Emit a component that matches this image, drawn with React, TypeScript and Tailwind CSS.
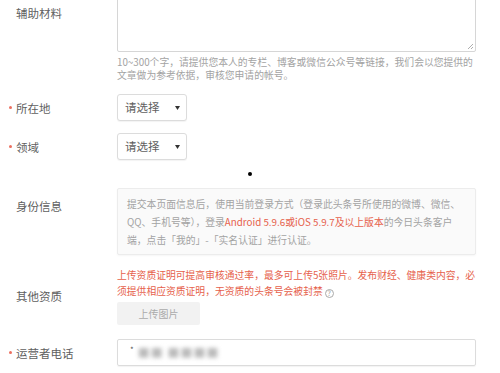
import React from "react";

function Label({ text, required }: { text: string; required?: boolean }) {
  return (
    <div className="flex w-[117px] shrink-0 items-center pl-[9px] text-[11.5px] leading-[16px] text-[#5f5f5f]">
      <span className="flex w-[7px] items-center">
        {required && <span className="h-[3px] w-[3px] rounded-full bg-[#ec6f5f]" />}
      </span>
      <span>{text}</span>
    </div>
  );
}

function Select() {
  return (
    <div className="flex h-[27px] w-[70px] items-center justify-between rounded-[3px] border border-[#dcdcdc] bg-white pl-[7px] pr-[6px] text-[11.5px] text-[#5f5f5f] shadow-[0_1px_1px_rgba(0,0,0,0.05)]">
      <span>请选择</span>
      <svg width="5" height="4" viewBox="0 0 5 4">
        <path d="M0 0H5L2.5 4Z" fill="#333" />
      </svg>
    </div>
  );
}

export default function App() {
  return (
    <div
      className="h-[373px] w-[500px] overflow-hidden bg-white"
      style={{ fontFamily: '"Noto Sans CJK SC", "Noto Sans", sans-serif' }}
    >
      <div className="-mt-[22px] flex items-start">
        <div className="mt-[27px]">
          <Label text="辅助材料" />
        </div>
        <div className="relative h-[74px] w-[359px] rounded-[2px] border border-[#d6d6d6]">
          <svg className="absolute bottom-[1px] right-[1px]" width="7" height="7" viewBox="0 0 7 7">
            <path d="M6 1L1 6M6 4L4 6" stroke="#999" strokeWidth="0.8" />
          </svg>
        </div>
      </div>
      <div className="ml-[117px] mt-[4px] w-[360px] text-[9.8px] leading-[13px] text-[#a3a3a3]">
        10~300个字，请提供您本人的专栏、博客或微信公众号等链接，我们会以您提供的文章做为参考依据，审核您申请的帐号。
      </div>

      <div className="mt-[12px] flex items-center">
        <Label text="所在地" required />
        <Select />
      </div>
      <div className="mt-[12px] flex items-center">
        <Label text="领域" required />
        <Select />
      </div>

      <div className="flex h-[28px] items-center pl-[248px]">
        <div className="h-[4px] w-[4px] rounded-full bg-black" />
      </div>

      <div className="flex items-start">
        <div className="mt-[10px]">
          <Label text="身份信息" />
        </div>
        <div className="w-[359px] rounded-[2px] border border-[#ececec] bg-[#fafafa] px-[9px] pb-[5px] pt-[6px] text-[9.8px] leading-[18px] text-[#a3a3a3] shadow-[0_1px_2px_rgba(0,0,0,0.04)]">
          提交本页面信息后，使用当前登录方式（登录此头条号所使用的微博、微信、QQ、手机号等），登录
          <span className="text-[#e6614c]">Android 5.9.6或iOS 5.9.7及以上版本</span>
          的今日头条客户端，点击「我的」-「实名认证」进行认证。
        </div>
      </div>

      <div className="mt-[12px] flex items-center">
        <Label text="其他资质" />
        <div className="w-[360px]">
          <div className="text-[9.8px] leading-[16px] text-[#e6614c]">
            上传资质证明可提高审核通过率，最多可上传5张照片。发布财经、健康类内容，必须提供相应资质证明，无资质的头条号会被封禁
            <span className="ml-[2px] inline-flex h-[9px] w-[9px] items-center justify-center rounded-full border border-[#aaa] align-[-1px] text-[7px] leading-none text-[#999]">
              ?
            </span>
          </div>
          <div className="mt-[3px] flex h-[23px] w-[83px] items-center justify-center rounded-[2px] bg-[#f2f2f2] text-[10px] text-[#aaa]">
            上传图片
          </div>
        </div>
      </div>

      <div className="mt-[14px] flex items-center">
        <Label text="运营者电话" required />
        <div className="flex h-[27px] w-[359px] items-center rounded-[2px] border border-[#dcdcdc] pl-[12px] shadow-[0_1px_1px_rgba(0,0,0,0.05)]">
          <span className="-mt-[6px] text-[8px] text-[#555]">*</span>
          <span className="ml-[4px] text-[12px] font-bold tracking-[1px] text-[#bbb] blur-[2px]">
            ■■ ■■■■
          </span>
        </div>
      </div>
    </div>
  );
}
